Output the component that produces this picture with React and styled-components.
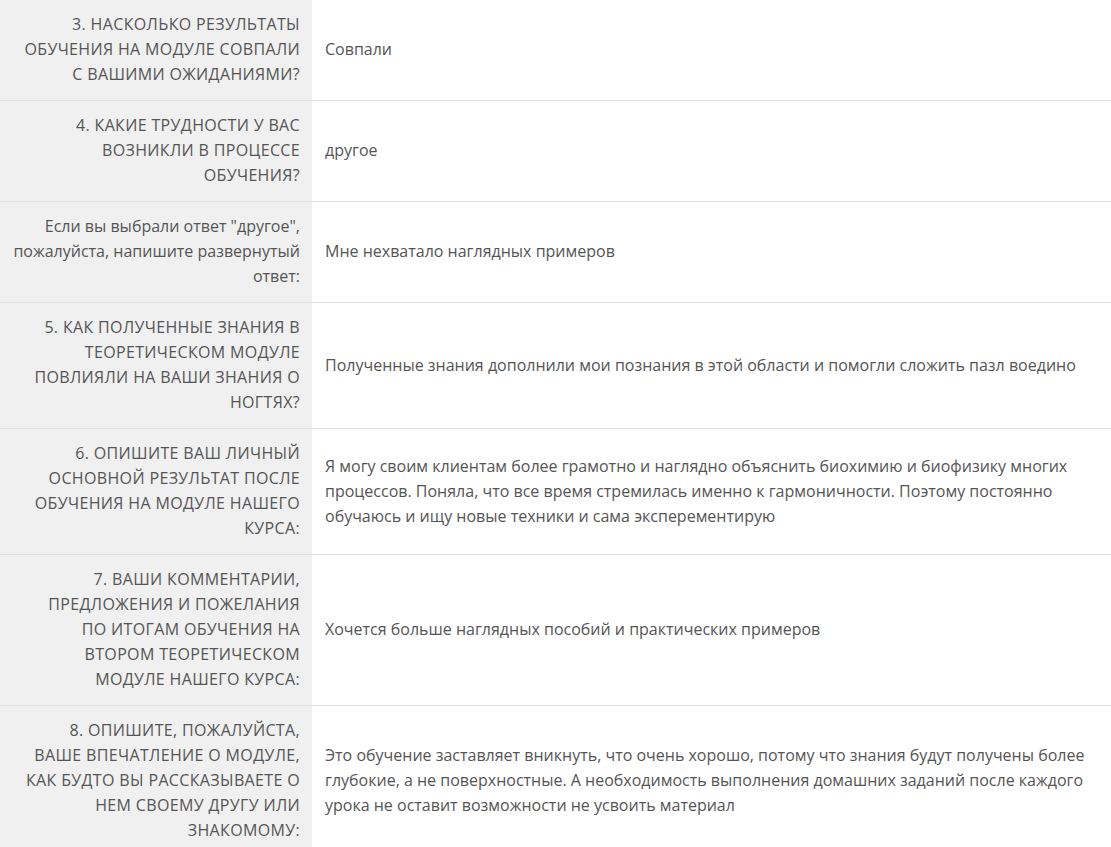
import React from "react";
import styled, { createGlobalStyle } from "styled-components";

const GlobalStyle = createGlobalStyle`
  html, body {
    margin: 0;
    padding: 0;
    background: #fff;
  }
  body {
    font-family: "Open Sans", "Liberation Sans", sans-serif;
    color: #555;
  }
`;

const Table = styled.div`
  width: 1111px;
`;

const Row = styled.div`
  display: grid;
  grid-template-columns: 312px 1fr;
  border-bottom: 1px solid #ddd;
`;

const Question = styled.div`
  background: #f0f0f0;
  padding: 12px 12px 13px;
  text-align: right;
  font-size: 16px;
  line-height: 25px;
  text-transform: ${(p) => (p.$plain ? "none" : "uppercase")};
  letter-spacing: ${(p) => (p.$plain ? "0" : "0.35px")};
`;

const Answer = styled.div`
  display: flex;
  align-items: center;
  padding: 12px 12px 13px 13px;
  font-size: 16px;
  line-height: 25px;
`;

const Line = styled.span`
  display: block;
  white-space: nowrap;
`;

const ROWS = [
  {
    q: ["3. Насколько результаты", "обучения на модуле совпали", "с вашими ожиданиями?"],
    a: ["Совпали"],
  },
  {
    q: ["4. Какие трудности у вас", "возникли в процессе", "обучения?"],
    a: ["другое"],
  },
  {
    q: ['Если вы выбрали ответ "другое",', "пожалуйста, напишите развернутый", "ответ:"],
    plain: true,
    a: ["Мне нехватало наглядных примеров"],
  },
  {
    q: ["5. Как полученные знания в", "теоретическом модуле", "повлияли на ваши знания о", "ногтях?"],
    a: ["Полученные знания дополнили мои познания в этой области и помогли сложить пазл воедино"],
  },
  {
    q: ["6. Опишите ваш личный", "основной результат после", "обучения на модуле нашего", "курса:"],
    a: [
      "Я могу своим клиентам более грамотно и наглядно объяснить биохимию и биофизику многих",
      "процессов. Поняла, что все время стремилась именно к гармоничности. Поэтому постоянно",
      "обучаюсь и ищу новые техники и сама эксперементирую",
    ],
  },
  {
    q: ["7. Ваши комментарии,", "предложения и пожелания", "по итогам обучения на", "втором теоретическом", "модуле нашего курса:"],
    a: ["Хочется больше наглядных пособий и практических примеров"],
  },
  {
    q: ["8. Опишите, пожалуйста,", "ваше впечатление о модуле,", "как будто вы рассказываете о", "нем своему другу или", "знакомому:"],
    a: [
      "Это обучение заставляет вникнуть, что очень хорошо, потому что знания будут получены более",
      "глубокие, а не поверхностные. А необходимость выполнения домашних заданий после каждого",
      "урока не оставит возможности не усвоить материал",
    ],
  },
];

export default function App() {
  return (
    <>
      <GlobalStyle />
      <Table>
        {ROWS.map((row, i) => (
          <Row key={i}>
            <Question $plain={row.plain}>
              {row.q.map((l, j) => (
                <Line key={j}>{l}</Line>
              ))}
            </Question>
            <Answer>
              <div>
                {row.a.map((l, j) => (
                  <Line key={j}>{l}</Line>
                ))}
              </div>
            </Answer>
          </Row>
        ))}
      </Table>
    </>
  );
}
